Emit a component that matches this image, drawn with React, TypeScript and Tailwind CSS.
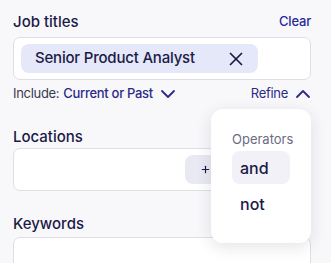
import { X, ChevronDown, ChevronUp, Plus } from "lucide-react";

export default function App() {
  return (
    <div className="relative w-[331px] h-[263px] overflow-hidden bg-[#f8f8fb] font-['Inter',sans-serif] text-[#1c1a46]">
      <div className="px-[13px] pr-[20px] pt-[12px]">
        {/* Job titles */}
        <div className="flex items-center justify-between h-[20px]">
          <span className="text-[15px] font-medium">Job titles</span>
          <button className="text-[13px] font-medium text-[#2b2a9a] tracking-[-0.2px]">Clear</button>
        </div>
        <div className="mt-[5px] h-[43px] rounded-[7px] border border-[#dedee4] bg-white px-[7px] flex items-center">
          <span className="flex items-center h-[29px] w-[237px] rounded-[8px] bg-[#e4e8f8] pl-[14px] pr-[11px] justify-between">
            <span className="text-[15px] font-medium tracking-[-0.2px] text-[#1c1a46]">Senior Product Analyst</span>
            <X size={22} strokeWidth={1.9} className="text-[#1c1a46]" />
          </span>
        </div>
        <div className="mt-[6px] flex items-center justify-between h-[16px] text-[13px] tracking-[-0.3px] -mr-[4px]">
          <span className="flex items-center">
            <span className="text-[#3a3950]">Include:</span>
            <span className="ml-[4px] font-medium text-[#2b2a8a]">Current or Past</span>
            <ChevronDown size={24} strokeWidth={1.8} className="ml-[3px] text-[#2b2a8a]" />
          </span>
          <span className="flex items-center text-[#2b2a8a]">
            <span>Refine</span>
            <ChevronUp size={24} strokeWidth={1.8} className="ml-[3px]" />
          </span>
        </div>

        {/* Locations */}
        <div className="mt-[25px] h-[20px] flex items-center">
          <span className="text-[15px] font-medium">Locations</span>
        </div>
        <div className="mt-[1px] h-[43px] rounded-[7px] border border-[#dedee4] bg-white flex items-center justify-end pr-[7px]">
          <span className="flex items-center h-[29px] w-[118px] rounded-[8px] bg-[#e9e9f4] pl-[15px]">
            <Plus size={11} strokeWidth={2.6} />
          </span>
        </div>

        {/* Keywords */}
        <div className="mt-[23px] h-[20px] flex items-center">
          <span className="text-[15px] font-medium">Keywords</span>
        </div>
        <div className="mt-[3px] h-[43px] rounded-[7px] border border-[#dedee4] bg-white" />
      </div>

      {/* Operators dropdown */}
      <div className="absolute left-[211px] top-[109px] w-[100px] h-[134px] rounded-[12px] bg-white shadow-[0_4px_16px_rgba(30,30,60,0.12)] px-[21px] pt-[21px]">
        <div className="text-[13px] text-[#6b6a82] leading-[18px]">Operators</div>
        <div className="mt-[3px] h-[33px] w-[58px] rounded-[8px] bg-[#f1f1f7] flex items-center pl-[8px] text-[16px] font-medium">and</div>
        <div className="mt-[3px] h-[33px] flex items-center pl-[8px] text-[16px] font-medium">not</div>
      </div>
    </div>
  );
}
